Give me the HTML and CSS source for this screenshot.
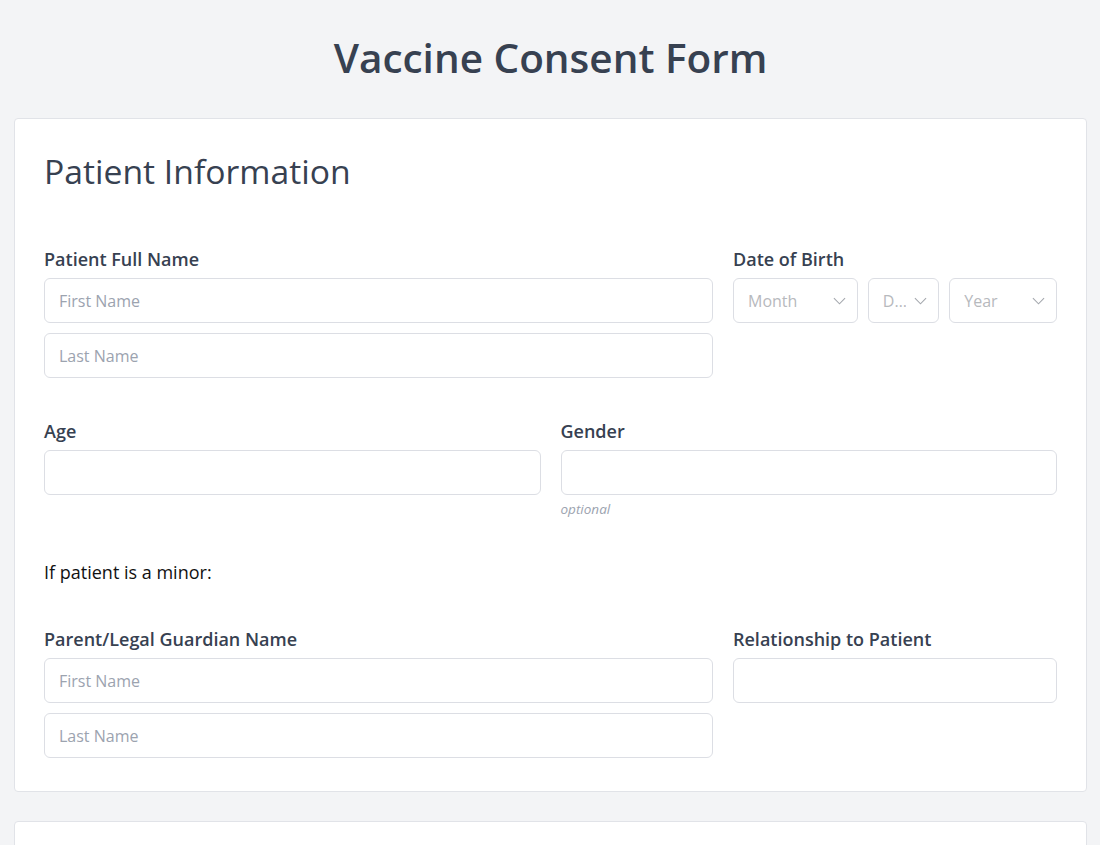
FILE: index.html
```html
<!DOCTYPE html>
<html lang="en">
<head>
<meta charset="utf-8">
<title>Vaccine Consent Form</title>
<link rel="stylesheet" href="styles.css">
</head>
<body>
<div class="page">
  <h1 class="title">Vaccine Consent Form</h1>

  <section class="card">
    <h2 class="card-title">Patient Information</h2>

    <div class="row row-wide">
      <div class="field">
        <label class="label">Patient Full Name</label>
        <div class="stack">
          <input class="input" type="text" placeholder="First Name">
          <input class="input" type="text" placeholder="Last Name">
        </div>
      </div>
      <div class="field">
        <label class="label">Date of Birth</label>
        <div class="dob">
          <div class="select"><span class="sel-text">Month</span><svg class="chev" viewBox="0 0 14 8"><path d="M1 1l6 6 6-6"/></svg></div>
          <div class="select"><span class="sel-text">Day</span><svg class="chev" viewBox="0 0 14 8"><path d="M1 1l6 6 6-6"/></svg></div>
          <div class="select"><span class="sel-text">Year</span><svg class="chev" viewBox="0 0 14 8"><path d="M1 1l6 6 6-6"/></svg></div>
        </div>
      </div>
    </div>

    <div class="row row-half">
      <div class="field">
        <label class="label">Age</label>
        <input class="input" type="text">
      </div>
      <div class="field">
        <label class="label">Gender</label>
        <input class="input" type="text">
        <div class="hint">optional</div>
      </div>
    </div>

    <p class="note">If patient is a minor:</p>

    <div class="row row-wide">
      <div class="field">
        <label class="label">Parent/Legal Guardian Name</label>
        <div class="stack">
          <input class="input" type="text" placeholder="First Name">
          <input class="input" type="text" placeholder="Last Name">
        </div>
      </div>
      <div class="field">
        <label class="label">Relationship to Patient</label>
        <input class="input" type="text">
      </div>
    </div>
  </section>

  <section class="card card-next"></section>
</div>
</body>
</html>
```

FILE: styles.css
```css
* { box-sizing: border-box; }

html, body {
  margin: 0;
  padding: 0;
  background: #f3f4f6;
  font-family: "Open Sans", "Noto Sans", sans-serif;
  color: #374151;
}

.page {
  padding: 31px 13px 0 14px;
}

.title {
  margin: 0 0 34px;
  text-align: center;
  font-size: 40.5px;
  line-height: 53px;
  font-weight: 600;
  color: #374151;
}

.card {
  background: #fff;
  border: 1px solid #e1e3e8;
  border-radius: 4px;
  padding: 31px 29px 33px;
}

.card-next {
  margin-top: 29px;
  height: 60px;
}

.card-title {
  margin: 0 0 54px;
  font-size: 33.7px;
  line-height: 43px;
  font-weight: 400;
  color: #374151;
}

.row {
  display: grid;
  column-gap: 20px;
  margin-bottom: 41px;
}

.row:last-child { margin-bottom: 0; }

.row-wide { grid-template-columns: minmax(0, 669fr) minmax(0, 324fr); }
.row-half { grid-template-columns: minmax(0, 1fr) minmax(0, 1fr); }

.field {
  display: flex;
  flex-direction: column;
  min-width: 0;
}

.label {
  font-size: 18px;
  line-height: 25px;
  font-weight: 600;
  color: #374151;
  margin-bottom: 6px;
}

.stack {
  display: flex;
  flex-direction: column;
  gap: 10px;
}

.input {
  display: block;
  width: 100%;
  height: 45px;
  border: 1px solid #dcdee4;
  border-radius: 6px;
  background: #fff;
  padding: 0 14px;
  font-family: inherit;
  font-size: 16px;
  color: #374151;
  outline: none;
}

.input::placeholder { color: #9ca3af; }

.dob {
  display: grid;
  grid-template-columns: minmax(0, 124fr) minmax(0, 71fr) minmax(0, 107fr);
  gap: 10px;
}

.select {
  height: 45px;
  border: 1px solid #dcdee4;
  border-radius: 6px;
  background: #fff;
  display: flex;
  align-items: center;
  padding: 0 11px 0 14px;
  gap: 8px;
  min-width: 0;
}

.sel-text {
  flex: 1 1 auto;
  min-width: 0;
  overflow: hidden;
  white-space: nowrap;
  text-overflow: ellipsis;
  font-size: 16px;
  color: #b7b9bd;
}

.chev {
  flex: 0 0 auto;
  width: 13px;
  height: 8px;
  fill: none;
  stroke: #a5a8ae;
  stroke-width: 1.2;
}

.hint {
  margin-top: 5px;
  font-size: 13.5px;
  line-height: 19px;
  font-style: italic;
  color: #9ca3af;
}

.note {
  margin: 0 0 42px;
  font-size: 18px;
  line-height: 25px;
  color: #111;
}
```
